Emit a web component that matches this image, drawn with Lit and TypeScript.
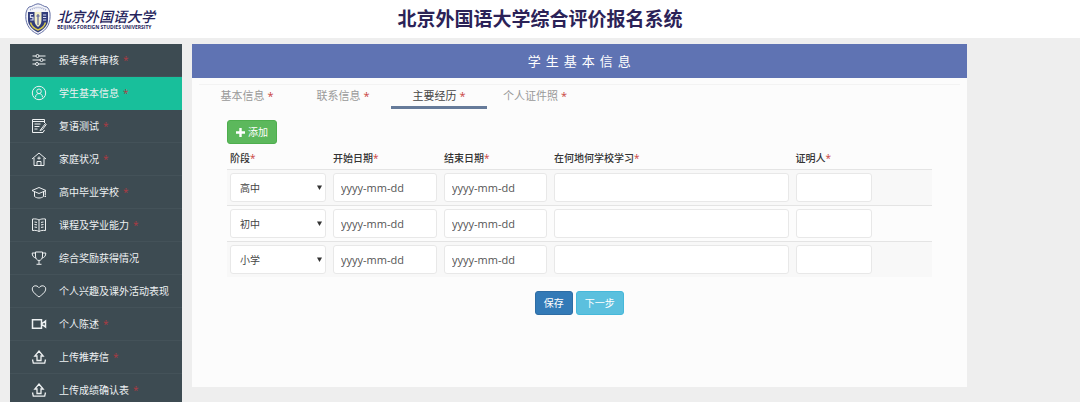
import { LitElement, html, svg, css } from "lit";
import { customElement, property, state } from "lit/decorators.js";
import { classMap } from "lit/directives/class-map.js";

const icons: Record<string, unknown> = {
  sliders: svg`<path stroke-width="1.200" d="M1.500 4h3.500M8 4h6.500M1.500 8h7.500M12 8h2.500M1.500 12h3M7.500 12h7"/><circle cx="6.500" cy="4" r="1.500"/><circle cx="10.500" cy="8" r="1.500"/><circle cx="6" cy="12" r="1.500"/>`,
  user: svg`<circle cx="8" cy="8" r="6.700"/><circle cx="8" cy="6.300" r="2.300"/><path d="M4.500 12.300c0-5 7-5 7 0"/>`,
  edit: svg`<path d="M13.500 5V1.500h-12v13h10.500l1.500-2.500"/><path d="M1.500 3.500h12M3.500 6h6M3.500 8.500h5M3.500 11h3"/><path d="M14.500 5.500 9 12.500l2.500-1 3.700-5z"/>`,
  home: svg`<path d="M1 8 8 2l7 6M3 7v7.500h10V7M6 14.500v-4h4v4M8 5.500v3M6.300 7.200h3.400"/>`,
  cap: svg`<path d="M1 6.500 8 3.500l7 3-7 3zM3.500 8v4.500c2.500 2 6.500 2 9 0V8M14.300 7v4.500M13.500 12.500h1.500"/>`,
  book: svg`<path d="M8 3C6.500 2 4 1.700 1.500 2v11.500c2.500-.3 5 0 6.500 1 1.500-1 4-1.300 6.500-1V2C12 1.700 9.500 2 8 3zM8 3v11.500M3.500 5l2.500.4M3.500 7.500l2.500.4M3.500 10l2.500.4M12.500 5l-2.500.4M12.500 7.500l-2.500.4M12.500 10l-2.500.4"/>`,
  cup: svg`<path d="M4.500 2h7v4c0 2.500-1.500 4.500-3.500 4.500S4.500 8.500 4.500 6zM4.500 3H1.200c0 3 1.300 4.500 3.800 5M11.500 3h3.300c0 3-1.300 4.500-3.800 5M8 10.500V14M5.500 14.300h5"/>`,
  heart: svg`<path d="M8 14C4 11 1.300 8.700 1.300 5.900 1.300 2.500 5.800 1.600 8 4.700c2.200-3.100 6.700-2.200 6.700 1.200C14.700 8.700 12 11 8 14z"/>`,
  video: svg`<path stroke-width="1.500" d="M1.500 3.700h9v8.600h-9zM10.500 8l4-3v6z"/>`,
  upload: svg`<path stroke-width="1.300" d="M6 11.500V7H3.800L8 2l4.200 5H10v4.500zM1.500 10.500l.800 3.700h11.400l.800-3.700"/>`,
};

interface NavItem { icon: string; label: string; required: boolean; }

const NAV: NavItem[] = [
  { icon: "sliders", label: "报考条件审核", required: true },
  { icon: "user", label: "学生基本信息", required: true },
  { icon: "edit", label: "复语测试", required: true },
  { icon: "home", label: "家庭状况", required: true },
  { icon: "cap", label: "高中毕业学校", required: true },
  { icon: "book", label: "课程及学业能力", required: true },
  { icon: "cup", label: "综合奖励获得情况", required: false },
  { icon: "heart", label: "个人兴趣及课外活动表现", required: false },
  { icon: "video", label: "个人陈述", required: true },
  { icon: "upload", label: "上传推荐信", required: true },
  { icon: "upload", label: "上传成绩确认表", required: true },
];

const FONT = css`"Open Sans", "Noto Sans CJK SC", sans-serif`;

@customElement("site-header")
export class SiteHeader extends LitElement {
  static styles = css`
    :host { display: block; background: #fff; font-family: ${FONT}; }
    .bar { display: grid; grid-template-columns: 1fr auto 1fr; align-items: center; height: 38px; padding: 0 25px; }
    .brand { display: flex; align-items: center; gap: 6px; color: #25245c; text-decoration: none; }
    .crest { width: 26px; height: 32px; }
    .names { display: flex; flex-direction: column; }
    .cn { font: italic 500 14px/16px "Noto Sans CJK SC", sans-serif; white-space: nowrap; }
    .en { font: 700 5px/6px "Open Sans", sans-serif; white-space: nowrap; }
    h1 { margin: 0; font-size: 19px; line-height: 26px; font-weight: 700; color: #2b2257; white-space: nowrap; }
  `;
  render() {
    return html`
      <header class="bar">
        <a class="brand" href="#">
          <svg class="crest" viewBox="0 0 26 32" aria-hidden="true">
            <path d="M4 4C7 4 10 .8 13 .8S19 4 22 4c1 1 2.500 3 3 6 .8 9-2 17-12 21.400C3 27-.2 19 1 10c.500-3 2-5 3-6z" fill="#f4f5fa" stroke="#6470a5" stroke-width="1"/>
            <path d="M5 7q8-5 16 0" fill="none" stroke="#9aa3c8" stroke-width="1.500" stroke-dasharray="1 1"/>
            <path d="M3 9h20v8c0 5-4 9.500-10 12.500C7 26.500 3 22 3 17z" fill="#303c7b"/>
            <path d="M9.500 9h7v8c0 3-1 5-3.500 7-2.500-2-3.500-4-3.500-7z" fill="#f1eec8"/>
            <path d="M8 11.500H5.500v2.800H8v2.700H5.300M18 12h3.200M18 14.500h3.200M18 17h3.200" fill="none" stroke="#d5daf0" stroke-width="1.200"/>
            <path d="M5.500 19.500c1 3.500 3.500 6 7.500 7.500 4-1.500 6.500-4 7.500-7.500" fill="none" stroke="#d8c94e" stroke-width="1.500"/>
            <path d="M13 11v11M11.300 13h3.400" fill="none" stroke="#59609a" stroke-width="1.200"/>
          </svg>
          <span class="names">
            <span class="cn">北京外国语大学</span>
            <span class="en">BEIJING FOREIGN STUDIES UNIVERSITY</span>
          </span>
        </a>
        <h1>北京外国语大学综合评价报名系统</h1>
      </header>
    `;
  }
}

@customElement("side-nav")
export class SideNav extends LitElement {
  @property({ type: Number }) current = 1;
  static styles = css`
    :host { display: block; background: #3d4b52; font-family: ${FONT}; }
    ul { list-style: none; margin: 0; padding: 0; }
    .item { box-sizing: border-box; display: flex; align-items: center; height: 33px; padding-left: 21px;
      border-bottom: 1px solid #445259; color: #eef1f2; font-size: 10px; line-height: 16px;
      text-decoration: none; white-space: nowrap; }
    .active { background: #18bf9b; border-color: #18bf9b; }
    .icon { width: 16px; height: 16px; margin-right: 12px; fill: none; stroke: currentColor; stroke-width: 1; }
    .req { margin-left: 4px; color: #b03a42; }
  `;
  render() {
    return html`<nav><ul>${NAV.map((n, i) => html`
      <li><a href="#" class=${classMap({ item: true, active: i === this.current })}>
        <svg class="icon" viewBox="0 0 16 16" aria-hidden="true">${icons[n.icon]}</svg>
        <span>${n.label}</span>${n.required ? html`<span class="req">*</span>` : ""}
      </a></li>`)}</ul></nav>`;
  }
}

@customElement("experience-panel")
export class ExperiencePanel extends LitElement {
  @state() private tab = 2;
  @state() private rows = ["高中", "初中", "小学"];
  static styles = css`
    :host { display: block; background: #fcfcfc; font-family: ${FONT}; color: #333; }
    h2 { margin: 0; background: #5f73b3; color: #fff; font-size: 13px; line-height: 34px; font-weight: 400;
      letter-spacing: 5px; text-indent: 5px; text-align: center; }
    .tabs { display: flex; margin: 6px 7px 0; border-top: 1px solid #f3f3f3; }
    .tab { box-sizing: border-box; width: 96px; height: 24px; padding: 0; border: 0; border-bottom: 3px solid transparent;
      background: none; font: 11px/20px ${FONT}; color: #999; white-space: nowrap; }
    .tab.on { color: #444; border-color: #667b9a; }
    .req { color: #c9433c; }
    .body { padding: 11px 35px 72px; }
    .btn { height: 24px; border: 1px solid; border-radius: 3px; padding: 0 8px; color: #fff; font: 10px/16px ${FONT}; }
    .add { display: flex; align-items: center; gap: 3px; background: #5cb85c; border-color: #4eae4e; }
    .plus { width: 9px; height: 9px; fill: #fff; }
    table { width: 100%; border-collapse: separate; border-spacing: 0; table-layout: fixed; margin-top: 2px; }
    .c-stage { width: 103px; } .c-start { width: 111px; } .c-end { width: 110px; }
    .c-witness { width: 83px; } .c-rest { width: 56px; }
    th { padding: 0 3px; height: 23px; text-align: left; font-size: 10px; line-height: 22px; font-weight: 500; white-space: nowrap; }
    td { padding: 3px 4px 3px 3px; border-top: 1px solid #e4e4e4; }
    tbody tr:nth-child(odd) { background: #f8f8f8; }
    input, select { box-sizing: border-box; display: block; width: 100%; height: 29px; margin: 0; padding: 0 7px;
      border: 1px solid #e8e8e8; border-radius: 3px; background: #fff; color: #444; font: 10px/16px ${FONT}; }
    input::placeholder { color: #555; opacity: 1; font-size: 11px; }
    .pick { display: grid; align-items: center; }
    .pick > * { grid-area: 1 / 1; }
    select { appearance: none; padding: 0 9px; }
    .caret { justify-self: end; width: 5px; height: 5px; margin-right: 4px; fill: #333; pointer-events: none; }
    .actions { display: flex; justify-content: center; gap: 3px; margin-top: 14px; }
    .save { background: #337ab7; border-color: #2e6da4; }
    .next { background: #5bc0de; border-color: #46b8da; }
  `;
  render() {
    const star = html`<span class="req">*</span>`;
    return html`
      <h2>学生基本信息</h2>
      <div class="tabs" role="tablist">
        ${["基本信息", "联系信息", "主要经历", "个人证件照"].map((t, i) => html`
          <button role="tab" aria-selected=${i === this.tab} class=${classMap({ tab: true, on: i === this.tab })}
            @click=${() => (this.tab = i)}>${t} ${star}</button>`)}
      </div>
      <div class="body">
        <button class="btn add" @click=${() => (this.rows = [...this.rows, "高中"])}>
          <svg class="plus" viewBox="0 0 9 9" aria-hidden="true"><path d="M3.300 0h2.400v3.300H9v2.400H5.700V9H3.300V5.700H0V3.300h3.300z"/></svg>添加
        </button>
        <table>
          <colgroup><col class="c-stage"><col class="c-start"><col class="c-end"><col><col class="c-witness"><col class="c-rest"></colgroup>
          <thead><tr>
            ${["阶段", "开始日期", "结束日期", "在何地何学校学习", "证明人"].map((h) => html`<th scope="col">${h}${star}</th>`)}
            <th></th>
          </tr></thead>
          <tbody>
            ${this.rows.map((r) => html`<tr>
              <td><div class="pick">
                <select aria-label="阶段">${["高中", "初中", "小学"].map((o) => html`<option ?selected=${o === r}>${o}</option>`)}</select>
                <svg class="caret" viewBox="0 0 5 5" aria-hidden="true"><path d="M0 .500h5L2.500 5z"/></svg>
              </div></td>
              <td><input aria-label="开始日期" placeholder="yyyy-mm-dd"></td>
              <td><input aria-label="结束日期" placeholder="yyyy-mm-dd"></td>
              <td><input aria-label="在何地何学校学习"></td>
              <td><input aria-label="证明人"></td>
              <td></td>
            </tr>`)}
          </tbody>
        </table>
        <div class="actions">
          <button class="btn save">保存</button>
          <button class="btn next">下一步</button>
        </div>
      </div>
    `;
  }
}

@customElement("app-root")
export class AppRoot extends LitElement {
  static styles = css`
    :host { display: block; height: 100vh; overflow: hidden; background: #eee; }
    .layout { display: flex; align-items: flex-start; gap: 10px; padding: 6px 10.5% 0 10px; }
    .side { flex: 0 0 172px; }
    .main { flex: 1; min-width: 0; }
  `;
  render() {
    return html`
      <site-header></site-header>
      <div class="layout">
        <side-nav class="side"></side-nav>
        <experience-panel class="main"></experience-panel>
      </div>
    `;
  }
}
